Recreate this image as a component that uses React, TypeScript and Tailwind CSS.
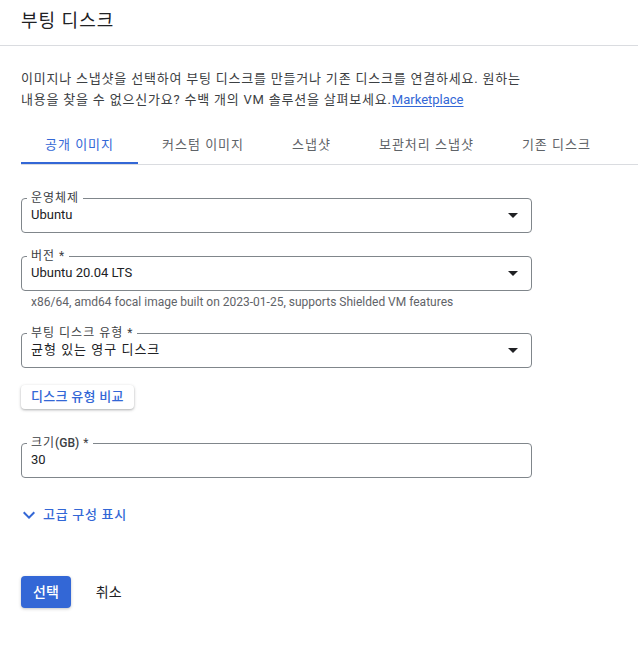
import type { ReactNode } from 'react';

const tabs = ['공개 이미지', '커스텀 이미지', '스냅샷', '보관처리 스냅샷', '기존 디스크'];

function Caret() {
  return (
    <svg width="10" height="5" viewBox="0 0 10 5" className="shrink-0">
      <path d="M0 0 L10 0 L5 5 Z" fill="#202124" />
    </svg>
  );
}

function Field({
  label,
  value,
  select = true,
  ko = false,
}: {
  label: ReactNode;
  value: string;
  select?: boolean;
  ko?: boolean;
}) {
  return (
    <fieldset className="w-[511px] rounded-[4px] border border-[#80868b]">
      <legend className="ml-[5px] px-[4px] text-[12px] leading-4 tracking-[1px] text-[#3c4043]">{label}</legend>
      <div className="flex items-center justify-between pb-[8px] pl-[9px] pr-[13px]">
        <span className={'text-[13px] leading-[18px] text-[#202124] ' + (ko ? 'tracking-[1px]' : '')}>{value}</span>
        {select && <Caret />}
      </div>
    </fieldset>
  );
}

export default function App() {
  return (
    <div
      className="min-h-[666px] w-full bg-white text-[#202124]"
      style={{ fontFamily: 'Roboto, "Noto Sans CJK KR", sans-serif' }}
    >
      {/* header */}
      <div className="h-[46px] border-b border-[#dadce0] pl-[21px] pt-[9px]">
        <h1 className="text-[18px] leading-6 font-normal tracking-[1px] text-[#202124]">부팅 디스크</h1>
      </div>

      <div className="pl-[21px] pt-[22px]">
        <p className="w-[512px] text-[13px] leading-[21px] tracking-[0.8px] text-[#3c4043]">
          이미지나 스냅샷을 선택하여 부팅 디스크를 만들거나 기존 디스크를 연결하세요. 원하는 내용을 찾을 수
          없으신가요? 수백 개의 VM 솔루션을 살펴보세요.
          <a className="tracking-normal text-[#3367d6] underline underline-offset-2">Marketplace</a>
        </p>
      </div>

      {/* tabs */}
      <div className="ml-[21px] mt-[14px] flex border-b border-[#dadce0]">
        {tabs.map((t, i) => (
          <div
            key={t}
            className={
              'border-b-2 px-6 pt-[11px] pb-[7px] text-[13px] leading-5 tracking-[1px] ' +
              (i === 0 ? 'border-[#3367d6] text-[#3367d6]' : 'border-transparent text-[#5f6368]')
            }
          >
            {t}
          </div>
        ))}
      </div>

      <div className="flex flex-col items-start pl-[21px]">
        <div className="mt-[25px]">
          <Field label="운영체제" value="Ubuntu" />
        </div>
        <div className="mt-[15px]">
          <Field label="버전 *" value="Ubuntu 20.04 LTS" />
        </div>
        <p className="mt-[3px] pl-[10px] text-[12px] leading-4 text-[#5f6368]">
          x86/64, amd64 focal image built on 2023-01-25, supports Shielded VM features
        </p>
        <div className="mt-[15px]">
          <Field label="부팅 디스크 유형 *" value="균형 있는 영구 디스크" ko />
        </div>
        <button className="mt-[17px] h-[24px] rounded-[4px] bg-white px-[10px] text-[13px] font-medium tracking-[0.3px] text-[#3367d6] shadow-[0_1px_3px_rgba(60,64,67,0.3),0_1px_2px_rgba(60,64,67,0.15)]">
          디스크 유형 비교
        </button>
        <div className="mt-[26px]">
          <Field
            label={
              <>
                크기<span className="font-medium tracking-normal">(GB)</span> *
              </>
            }
            value="30"
            select={false}
          />
        </div>

        <div className="mt-[25px] flex h-6 items-center gap-[2px] -ml-1 text-[13px] font-medium tracking-[0.7px] text-[#3367d6]">
          <svg width="24" height="24" viewBox="0 0 24 24">
            <path d="M16.59 8.59L12 13.17 7.41 8.59 6 10l6 6 6-6z" fill="#3367d6" />
          </svg>
          <span>고급 구성 표시</span>
        </div>

        <div className="mt-[49px] flex items-center gap-[9px]">
          <button className="h-[32px] rounded-[4px] bg-[#3367d6] px-[12px] text-[14px] font-medium text-white shadow-[0_1px_3px_rgba(60,64,67,0.3)]">
            선택
          </button>
          <button className="h-[32px] px-4 text-[14px] text-[#202124]">취소</button>
        </div>
      </div>
    </div>
  );
}
